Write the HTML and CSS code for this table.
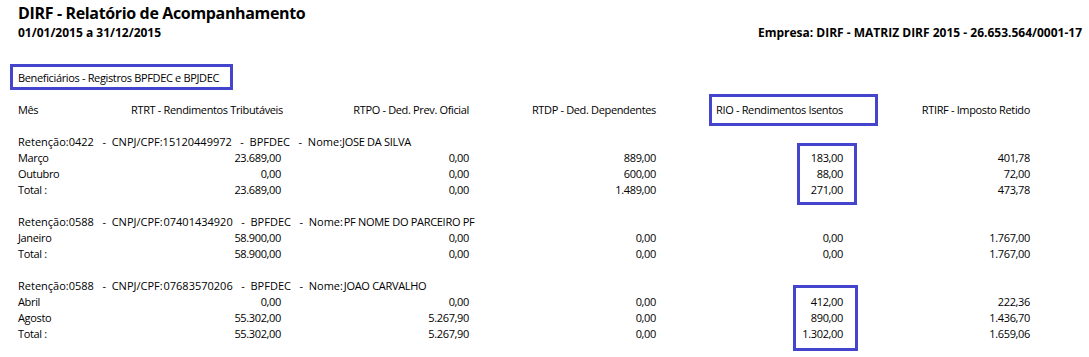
FILE: index.html
```html
<!DOCTYPE html>
<html lang="pt-BR">
<head>
<meta charset="utf-8">
<title>DIRF - Relatório de Acompanhamento</title>
<link rel="stylesheet" href="styles.css">
</head>
<body>
<div class="report">
  <header class="report-head">
    <h1 class="title">DIRF - Relatório de Acompanhamento</h1>
    <div class="subhead">
      <span class="period">01/01/2015 a 31/12/2015</span>
      <span class="company">Empresa: DIRF - MATRIZ DIRF 2015 - 26.653.564/0001-17</span>
    </div>
  </header>

  <div class="section-label">Beneficiários - Registros BPFDEC e BPJDEC</div>

  <div class="table">
    <div class="row head">
      <span class="lbl">Mês</span>
      <span class="num">RTRT - Rendimentos Tributáveis</span>
      <span class="num">RTPO - Ded. Prev. Oficial</span>
      <span class="num">RTDP - Ded. Dependentes</span>
      <span class="num">RIO - Rendimentos Isentos</span>
      <span class="num">RTIRF - Imposto Retido</span>
    </div>

    <div class="group">
      <div class="row info">Retenção:0422   -  CNPJ/CPF:15120449972   -  BPFDEC   -  Nome:<span class="name">JOSE DA SILVA</span></div>
      <div class="row"><span class="lbl">Março</span><span class="num">23.689,00</span><span class="num">0,00</span><span class="num">889,00</span><span class="num">183,00</span><span class="num">401,78</span></div>
      <div class="row"><span class="lbl">Outubro</span><span class="num">0,00</span><span class="num">0,00</span><span class="num">600,00</span><span class="num">88,00</span><span class="num">72,00</span></div>
      <div class="row"><span class="lbl">Total :</span><span class="num">23.689,00</span><span class="num">0,00</span><span class="num">1.489,00</span><span class="num">271,00</span><span class="num">473,78</span></div>
    </div>

    <div class="group">
      <div class="row info">Retenção:0588   -  CNPJ/CPF:<span class="gap"> </span>07401434920   -  BPFDEC   -  Nome:<span class="gap"> </span><span class="name">PF NOME DO PARCEIRO PF</span></div>
      <div class="row"><span class="lbl">Janeiro</span><span class="num">58.900,00</span><span class="num">0,00</span><span class="num">0,00</span><span class="num">0,00</span><span class="num">1.767,00</span></div>
      <div class="row"><span class="lbl">Total :</span><span class="num">58.900,00</span><span class="num">0,00</span><span class="num">0,00</span><span class="num">0,00</span><span class="num">1.767,00</span></div>
    </div>

    <div class="group">
      <div class="row info">Retenção:0588   -  CNPJ/CPF:<span class="gap"> </span>07683570206   -  BPFDEC   -  Nome:<span class="gap"> </span><span class="name">JOAO CARVALHO</span></div>
      <div class="row"><span class="lbl">Abril</span><span class="num">0,00</span><span class="num">0,00</span><span class="num">0,00</span><span class="num">412,00</span><span class="num">222,36</span></div>
      <div class="row"><span class="lbl">Agosto</span><span class="num">55.302,00</span><span class="num">5.267,90</span><span class="num">0,00</span><span class="num">890,00</span><span class="num">1.436,70</span></div>
      <div class="row"><span class="lbl">Total :</span><span class="num">55.302,00</span><span class="num">5.267,90</span><span class="num">0,00</span><span class="num">1.302,00</span><span class="num">1.659,06</span></div>
    </div>
  </div>

  <div class="mark mark-head"></div>
  <div class="mark mark-g1"></div>
  <div class="mark mark-g3"></div>
</div>
</body>
</html>
```

FILE: styles.css
```css
* { box-sizing: border-box; }

html, body {
  margin: 0;
  padding: 0;
  background: #ffffff;
}

body {
  font-family: "Open Sans", "Noto Sans", "DejaVu Sans", sans-serif;
  color: #000000;
  width: 1089px;
  height: 357px;
  overflow: hidden;
}

.report {
  position: relative;
  padding: 0 7px 0 10px;
}

.report-head {
  padding: 3px 0 0 8px;
}

.title {
  margin: 0;
  font-size: 16px;
  line-height: 20px;
  font-weight: 700;
  letter-spacing: -0.35px;
}

.subhead {
  display: flex;
  justify-content: space-between;
  align-items: baseline;
  padding-top: 2px;
  font-size: 12px;
  line-height: 16px;
  font-weight: 700;
  letter-spacing: 0;
}

.section-label {
  display: inline-block;
  margin-top: 23px;
  border: 3px solid #4444cc;
  padding: 3px 11px 1px 5px;
  font-size: 11px;
  line-height: 16px;
  letter-spacing: -0.35px;
}

.table {
  margin-top: 12px;
  padding-left: 8px;
  font-size: 11px;
  line-height: 16px;
  letter-spacing: -0.35px;
}

.row {
  display: grid;
  grid-template-columns: 113px 150px 188px 187px 187px 187px;
  height: 16px;
  white-space: nowrap;
}

.row.head {
  margin-bottom: 16px;
}

.group {
  margin-bottom: 16px;
}

.row.info {
  display: block;
  white-space: pre;
  letter-spacing: 0;
}

.gap {
  word-spacing: -2px;
}

.name {
  letter-spacing: -0.3px;
}

.lbl {
  text-align: left;
}

.num {
  text-align: right;
}

.mark {
  position: absolute;
  border: 3px solid #4444cc;
}

.mark-head {
  left: 709px;
  top: 94px;
  width: 169px;
  height: 32px;
}

.mark-g1 {
  left: 797px;
  top: 143px;
  width: 60px;
  height: 62px;
}

.mark-g3 {
  left: 793px;
  top: 285px;
  width: 65px;
  height: 66px;
}
```
